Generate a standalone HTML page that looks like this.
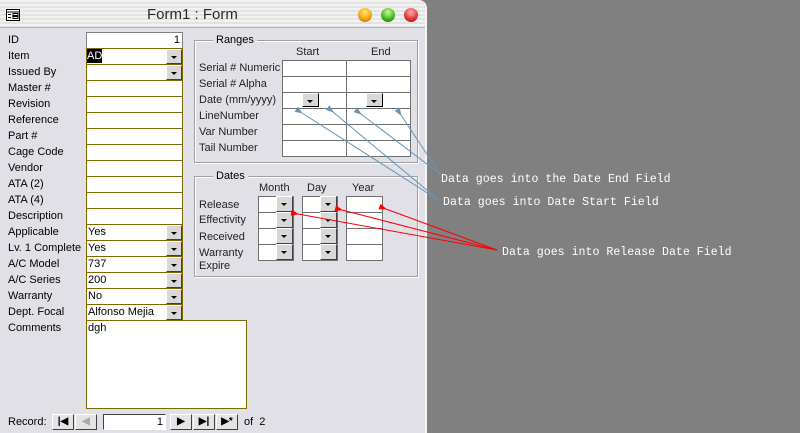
<!DOCTYPE html>
<html><head><style>
*{margin:0;padding:0;box-sizing:border-box}
body{width:800px;height:433px;background:#808080;position:relative;overflow:hidden;font-family:"Liberation Sans",Tahoma,sans-serif;font-size:11px;color:#000}
.a{position:absolute}
#win{left:0;top:0;width:427px;height:433px;background:#e1e0e6;border-right:2px solid #f4f4f4;border-radius:0 8px 0 0}
#title{left:0;top:0;width:425px;height:28px;border-radius:0 8px 0 0;background:repeating-linear-gradient(#f2f2f2 0 2px,#e3e3e3 2px 4px);border-bottom:1px solid #b0b0b0}
.lbl{position:absolute;left:8px;font-size:11px;color:#000}
.f{position:absolute;left:86px;width:97px;height:17px;background:#fff;border:1px solid #7a6a00}
.dd{position:absolute;right:0;top:0;width:16px;height:15px;background:#d8d8d8;border:1px solid;border-color:#fff #404040 #404040 #fff}
.dd:after{content:"";position:absolute;left:4px;top:6px;border-left:3px solid transparent;border-right:3px solid transparent;border-top:3px solid #000}
.grp{position:absolute;border:1px solid #a0a0a0;box-shadow:1px 1px 0 #fff inset,1px 1px 0 #fff}
.gt{position:absolute;background:#e1e0e6;padding:0 3px;font-size:11px}
.c{position:absolute;background:#fff;border:1px solid #707070}
.t{position:absolute;font-size:11px;color:#222}
.ann{position:absolute;color:#fff;font-family:"Liberation Mono",monospace;font-size:11.6px;white-space:nowrap}
.nb{position:absolute;top:414px;height:16px;background:#e4e4e4;border:1px solid;border-color:#fff #404040 #404040 #fff;font-size:10px;text-align:center;line-height:14px;font-weight:bold}
</style></head><body>
<div id="win" class="a"></div>
<div id="title" class="a"></div>
<svg class="a" style="left:6px;top:9px" width="14" height="12"><rect x="0.5" y="0.5" width="13" height="11" fill="#fff" stroke="#000"/><line x1="0" y1="3" x2="14" y2="3" stroke="#000"/><rect x="2" y="5" width="3" height="1" fill="#000"/><rect x="2" y="8" width="3" height="1" fill="#000"/><rect x="7" y="4.5" width="5" height="2" fill="none" stroke="#000"/><rect x="7" y="7.5" width="5" height="2" fill="none" stroke="#000"/></svg>
<div class="a" style="left:147px;top:6px;font-size:15px;color:#2a2a2a">Form1 : Form</div>
<div class="a" style="left:358px;top:8px;width:14px;height:14px;border-radius:50%;background:radial-gradient(circle at 50% 30%,#ffe86a,#f0a010 60%,#a05a00)"></div>
<div class="a" style="left:381px;top:8px;width:14px;height:14px;border-radius:50%;background:radial-gradient(circle at 50% 30%,#c8ff90,#40b020 60%,#206010)"></div>
<div class="a" style="left:404px;top:8px;width:14px;height:14px;border-radius:50%;background:radial-gradient(circle at 50% 30%,#ffb0b0,#e03030 60%,#801010)"></div>

<div class="lbl" style="top:34px">ID</div><div class="f" style="top:32px;border-color:#808080;text-align:right;padding-right:2px;font-size:11px;line-height:14px">1</div>
<div class="lbl" style="top:50px">Item</div><div class="f" style="top:48px"><span style="background:#000;color:#fff;font-size:11px;line-height:14px;display:inline-block">AD</span><div class="dd"></div></div>
<div class="lbl" style="top:66px">Issued By</div><div class="f" style="top:64px"><div class="dd"></div></div>
<div class="lbl" style="top:82px">Master #</div><div class="f" style="top:80px"></div>
<div class="lbl" style="top:98px">Revision</div><div class="f" style="top:96px"></div>
<div class="lbl" style="top:114px">Reference</div><div class="f" style="top:112px"></div>
<div class="lbl" style="top:130px">Part #</div><div class="f" style="top:128px"></div>
<div class="lbl" style="top:146px">Cage Code</div><div class="f" style="top:144px"></div>
<div class="lbl" style="top:162px">Vendor</div><div class="f" style="top:160px"></div>
<div class="lbl" style="top:178px">ATA (2)</div><div class="f" style="top:176px"></div>
<div class="lbl" style="top:194px">ATA (4)</div><div class="f" style="top:192px"></div>
<div class="lbl" style="top:210px">Description</div><div class="f" style="top:208px"></div>
<div class="lbl" style="top:226px">Applicable</div><div class="f" style="top:224px;line-height:14px;padding-left:1px">Yes<div class="dd"></div></div>
<div class="lbl" style="top:242px">Lv. 1 Complete</div><div class="f" style="top:240px;line-height:14px;padding-left:1px">Yes<div class="dd"></div></div>
<div class="lbl" style="top:258px">A/C Model</div><div class="f" style="top:256px;line-height:14px;padding-left:1px">737<div class="dd"></div></div>
<div class="lbl" style="top:274px">A/C Series</div><div class="f" style="top:272px;line-height:14px;padding-left:1px">200<div class="dd"></div></div>
<div class="lbl" style="top:290px">Warranty</div><div class="f" style="top:288px;line-height:14px;padding-left:1px">No<div class="dd"></div></div>
<div class="lbl" style="top:306px">Dept. Focal</div><div class="f" style="top:304px;line-height:14px;padding-left:1px">Alfonso Mejia<div class="dd"></div></div>
<div class="lbl" style="top:322px">Comments</div><div class="f" style="top:320px;width:161px;height:89px;line-height:14px;padding-left:1px">dgh</div>

<div class="a" style="left:8px;top:416px">Record:</div>
<div class="nb" style="left:52px;width:22px">|◀</div>
<div class="nb" style="left:75px;width:22px;color:#aaa">◀</div>
<div class="a" style="left:103px;top:414px;width:63px;height:16px;background:#fff;border:1px solid;border-color:#404040 #fff #fff #404040;text-align:right;padding-right:2px;line-height:14px">1</div>
<div class="nb" style="left:170px;width:22px">▶</div>
<div class="nb" style="left:193px;width:22px">▶|</div>
<div class="nb" style="left:216px;width:22px">▶*</div>
<div class="a" style="left:244px;top:416px">of&nbsp; 2</div>

<div class="grp" style="left:194px;top:40px;width:224px;height:123px"></div>
<div class="gt" style="left:213px;top:34px">Ranges</div>
<div class="t" style="left:296px;top:46px">Start</div><div class="t" style="left:371px;top:46px">End</div>
<div class="t" style="left:199px;top:62px">Serial # Numeric</div>
<div class="t" style="left:199px;top:78px">Serial # Alpha</div>
<div class="t" style="left:199px;top:94px">Date (mm/yyyy)</div>
<div class="t" style="left:199px;top:110px">LineNumber</div>
<div class="t" style="left:199px;top:126px">Var Number</div>
<div class="t" style="left:199px;top:142px">Tail Number</div>
<div class="c" style="left:282px;top:60px;width:129px;height:97px;background:linear-gradient(#707070,#707070) 63px 0/1px 100% no-repeat,repeating-linear-gradient(#fff 0 15px,#707070 15px 16px)"></div>
<div class="dd" style="left:302px;top:93px;right:auto;width:17px;height:14px;border-color:#fff #000 #000 #fff"></div>
<div class="dd" style="left:366px;top:93px;right:auto;width:17px;height:14px;border-color:#fff #000 #000 #fff"></div>

<div class="grp" style="left:194px;top:176px;width:224px;height:101px"></div>
<div class="gt" style="left:213px;top:170px">Dates</div>
<div class="t" style="left:259px;top:182px">Month</div><div class="t" style="left:307px;top:182px">Day</div><div class="t" style="left:352px;top:182px">Year</div>
<div class="t" style="left:199px;top:199px">Release</div>
<div class="t" style="left:199px;top:214px">Effectivity</div>
<div class="t" style="left:199px;top:231px">Received</div>
<div class="t" style="left:199px;top:247px">Warranty</div>
<div class="t" style="left:199px;top:260px">Expire</div>
<div class="c" style="left:258px;top:196px;width:36px;height:65px;background:repeating-linear-gradient(#fff 0 15px,#707070 15px 16px)"></div>
<div class="c" style="left:302px;top:196px;width:36px;height:65px;background:repeating-linear-gradient(#fff 0 15px,#707070 15px 16px)"></div>
<div class="c" style="left:346px;top:196px;width:37px;height:65px;background:repeating-linear-gradient(#fff 0 15px,#707070 15px 16px)"></div>
<div class="dd" style="left:276px;top:196px;right:auto;width:17px;height:16px"></div>
<div class="dd" style="left:276px;top:212px;right:auto;width:17px;height:16px"></div>
<div class="dd" style="left:276px;top:228px;right:auto;width:17px;height:16px"></div>
<div class="dd" style="left:276px;top:244px;right:auto;width:17px;height:16px"></div>
<div class="dd" style="left:320px;top:196px;right:auto;width:17px;height:16px"></div>
<div class="dd" style="left:320px;top:212px;right:auto;width:17px;height:16px"></div>
<div class="dd" style="left:320px;top:228px;right:auto;width:17px;height:16px"></div>
<div class="dd" style="left:320px;top:244px;right:auto;width:17px;height:16px"></div>

<svg class="a" style="left:0;top:0" width="800" height="433">
<defs><marker id="bm" markerWidth="8" markerHeight="6" refX="1" refY="3" orient="auto-start-reverse"><path d="M0,3 L8,0 L8,6z" fill="#6a94b4"/></marker>
<marker id="rm" markerWidth="8" markerHeight="6" refX="1" refY="3" orient="auto-start-reverse"><path d="M0,3 L8,0 L8,6z" fill="#f00"/></marker></defs>
<g stroke="#6a94b4" stroke-width="1">
<line x1="302" y1="113" x2="440" y2="201" marker-start="url(#bm)"/>
<line x1="333" y1="112" x2="440" y2="201" marker-start="url(#bm)"/>
<line x1="361" y1="114" x2="440" y2="174" marker-start="url(#bm)"/>
<line x1="401" y1="115" x2="440" y2="174" marker-start="url(#bm)"/>
</g>
<g stroke="#f00" stroke-width="1">
<line x1="386" y1="209" x2="497" y2="250" marker-start="url(#rm)"/>
<line x1="342" y1="210" x2="497" y2="250" marker-start="url(#rm)"/>
<line x1="298" y1="214" x2="497" y2="250" marker-start="url(#rm)"/>
</g>
</svg>
<div class="ann" style="left:441px;top:173px">Data goes into the Date End Field</div>
<div class="ann" style="left:443px;top:196px">Data goes into Date Start Field</div>
<div class="ann" style="left:502px;top:246px">Data goes into Release Date Field</div>
</body></html>
